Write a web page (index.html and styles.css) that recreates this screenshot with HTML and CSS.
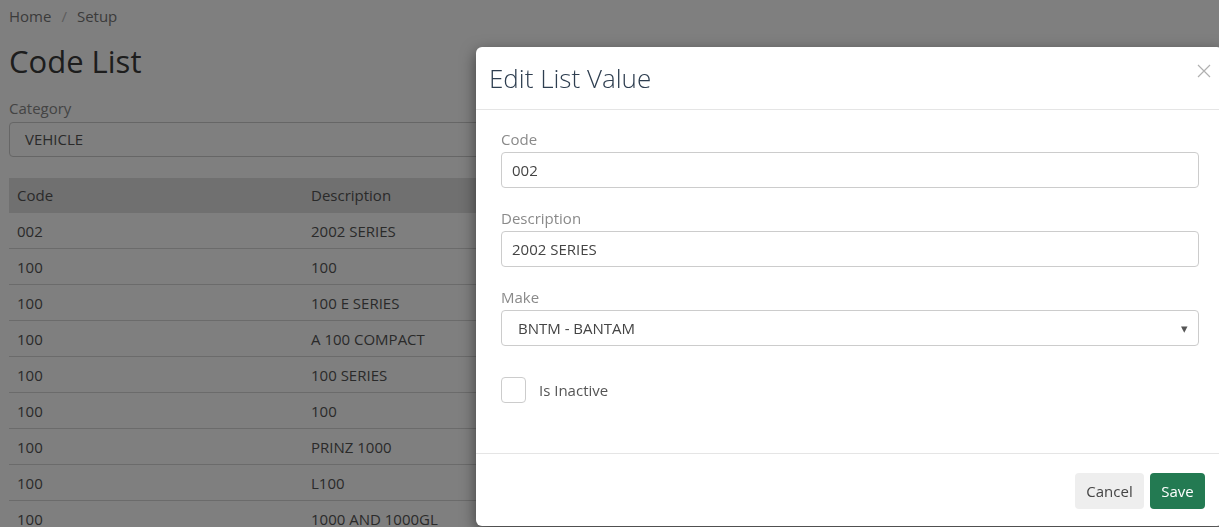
FILE: index.html
```html
<!DOCTYPE html>
<html>
<head>
<meta charset="utf-8">
<link rel="stylesheet" href="styles.css">
</head>
<body>
<div class="page">
  <div class="breadcrumb"><span>Home</span><span class="sep">/</span><span>Setup</span></div>
  <h1 class="page-title">Code List</h1>
  <div class="field-label">Category</div>
  <div class="page-select">VEHICLE</div>
  <div class="table">
    <div class="row head"><div class="c1">Code</div><div class="c2">Description</div></div>
    <div class="row"><div class="c1">002</div><div class="c2">2002 SERIES</div></div>
    <div class="row"><div class="c1">100</div><div class="c2">100</div></div>
    <div class="row"><div class="c1">100</div><div class="c2">100 E SERIES</div></div>
    <div class="row"><div class="c1">100</div><div class="c2">A 100 COMPACT</div></div>
    <div class="row"><div class="c1">100</div><div class="c2">100 SERIES</div></div>
    <div class="row"><div class="c1">100</div><div class="c2">100</div></div>
    <div class="row"><div class="c1">100</div><div class="c2">PRINZ 1000</div></div>
    <div class="row"><div class="c1">100</div><div class="c2">L100</div></div>
    <div class="row"><div class="c1">100</div><div class="c2">1000 AND 1000GL</div></div>
  </div>
</div>
<div class="backdrop"></div>
<div class="modal">
  <div class="modal-header">
    <div class="modal-title">Edit List Value</div>
    <svg class="close" width="14" height="14" viewBox="0 0 14 14"><path d="M1 1L13 13M13 1L1 13" stroke="#b0b0b0" stroke-width="1.2" fill="none"/></svg>
  </div>
  <div class="modal-body">
    <div class="m-label">Code</div>
    <div class="m-input">002</div>
    <div class="m-label">Description</div>
    <div class="m-input">2002 SERIES</div>
    <div class="m-label">Make</div>
    <div class="m-input m-select"><span>BNTM - BANTAM</span><span class="caret">&#9662;</span></div>
    <div class="check-row"><span class="checkbox"></span><span class="check-text">Is Inactive</span></div>
  </div>
  <div class="modal-footer">
    <button class="btn btn-cancel">Cancel</button>
    <button class="btn btn-save">Save</button>
  </div>
</div>
</body>
</html>
```
FILE: styles.css
```css
html, body {
  margin: 0;
  padding: 0;
  background: #fff;
  font-family: "Open Sans", "Liberation Sans", sans-serif;
  overflow: hidden;
}
.page {
  padding: 6px 9px 0;
  color: #555;
  font-size: 15px;
}
.breadcrumb {
  line-height: 20px;
  color: #777;
}
.breadcrumb .sep {
  color: #bbb;
  margin: 0 10px;
}
.page-title {
  margin: 15px 0 0;
  font-size: 31px;
  line-height: 40px;
  font-weight: 400;
  color: #3a3a3a;
}
.field-label {
  margin-top: 17px;
  line-height: 20px;
  color: #888;
}
.page-select {
  margin-top: 4px;
  height: 33px;
  border: 1px solid #ccc;
  border-radius: 4px;
  line-height: 33px;
  padding-left: 15px;
  color: #555;
}
.table {
  margin-top: 21px;
}
.row {
  display: grid;
  grid-template-columns: 294px 1fr;
  height: 35px;
  line-height: 36px;
  border-bottom: 1px solid #d6d6d6;
}
.row.head {
  background: #e0e0e0;
  border-bottom: none;
  height: 35px;
  line-height: 35px;
}
.row > div {
  padding-left: 8px;
}
.backdrop {
  position: fixed;
  inset: 0;
  background: rgba(0, 0, 0, 0.5);
}
.modal {
  position: fixed;
  left: 476px;
  top: 47px;
  width: 747px;
  height: 479px;
  background: #fff;
  border-radius: 6px;
  box-shadow: 0 5px 15px rgba(0, 0, 0, 0.5);
  display: flex;
  flex-direction: column;
}
.modal-header {
  height: 62px;
  border-bottom: 1px solid #e5e5e5;
  display: flex;
  align-items: flex-start;
  justify-content: space-between;
  padding: 0 12px 0 13px;
}
.modal-title {
  font-size: 26px;
  font-weight: 300;
  line-height: 36px;
  margin-top: 13px;
  color: #2e3e50;
}
.close {
  margin-top: 17px;
}
.modal-body {
  flex: 1;
  padding: 19px 24px 0 25px;
}
.m-label {
  font-size: 15px;
  line-height: 20px;
  color: #8a8a8a;
  margin-bottom: 3px;
}
.m-input {
  height: 34px;
  border: 1px solid #ccc;
  border-radius: 4px;
  line-height: 34px;
  padding-left: 10px;
  font-size: 15px;
  color: #444;
  margin-bottom: 20px;
}
.m-select {
  display: flex;
  justify-content: space-between;
  padding-left: 16px;
  padding-right: 10px;
  margin-bottom: 31px;
}
.caret {
  font-size: 13px;
  color: #555;
}
.check-row {
  display: flex;
  align-items: center;
}
.checkbox {
  border: 1px solid #ccc;
  border-radius: 4px;
  box-sizing: border-box;
  width: 25px;
  height: 26px;
}
.check-text {
  margin-left: 13px;
  font-size: 15px;
  color: #555;
}
.modal-footer {
  border-top: 1px solid #e5e5e5;
  padding: 19px 18px 17px;
  display: flex;
  justify-content: flex-end;
  gap: 6px;
}
.btn {
  font-family: "Open Sans", "Liberation Sans", sans-serif;
  font-size: 15px;
  height: 36px;
  border: none;
  border-radius: 4px;
  padding: 0 11px;
}
.btn-cancel {
  background: #eee;
  color: #444;
  width: 69px;
}
.btn-save {
  background: #237a52;
  color: #fff;
  width: 55px;
}
```
